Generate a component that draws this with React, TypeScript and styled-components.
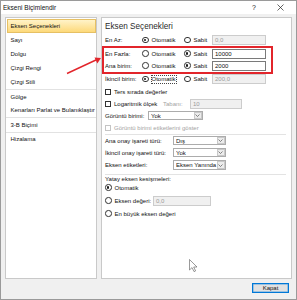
import styled, { createGlobalStyle } from "styled-components";

const GlobalStyle = createGlobalStyle`
  html, body {
    margin: 0;
    padding: 0;
    background: #ffffff;
  }
  body {
    font-family: "Liberation Sans", Arial, sans-serif;
    font-size: 6px;
    color: #111111;
  }
`;

const Window = styled.div`
  position: relative;
  width: 297px;
  height: 300px;
  box-sizing: border-box;
  border: 1px solid #9a9a9a;
  background: #f0f0f0;
  display: flex;
  flex-direction: column;
  overflow: hidden;
`;

const TitleBar = styled.div`
  height: 13px;
  flex: none;
  background: #ffffff;
  display: flex;
  align-items: center;
  padding: 0 3px 0 2px;
`;

const Title = styled.span`
  font-size: 6.5px;
  color: #111;
  flex: 1;
`;

const TitleButton = styled.span`
  width: 26px;
  display: flex;
  justify-content: center;
  align-items: center;
  font-size: 7px;
  color: #222;
`;

const Body = styled.div`
  display: flex;
  gap: 4px;
  padding: 3px 4px 0 4px;
  height: 265px;
  box-sizing: border-box;
  flex: none;
`;

const Nav = styled.div`
  width: 92px;
  flex: none;
  box-sizing: border-box;
  background: #ffffff;
  border: 1px solid #c9c9c9;
  padding-top: 1px;
`;

const NavItem = styled.div<{ $active?: boolean; $h?: number }>`
  height: ${(p) => p.$h ?? 13.5}px;
  box-sizing: border-box;
  display: flex;
  align-items: center;
  padding-left: 3px;
  white-space: nowrap;
  border: 1px solid ${(p) => (p.$active ? "#e6c064" : "transparent")};
  background: ${(p) =>
    p.$active ? "linear-gradient(#fff3c9, #fdd97a)" : "transparent"};
  margin: 0 0.5px;
`;

const NavSep = styled.div`
  height: 1px;
  background: #e2e2e2;
`;

const Pane = styled.div`
  flex: 1;
  box-sizing: border-box;
  background: #ffffff;
  border: 1px solid #c9c9c9;
  padding: 0 3px;
`;

const PaneTitle = styled.div`
  font-size: 8.2px;
  color: #2b2b2b;
  height: 13.5px;
  padding-top: 2px;
  display: flex;
  align-items: center;
`;

const Row = styled.div<{ $h?: number; $mt?: number }>`
  display: flex;
  align-items: center;
  height: ${(p) => p.$h ?? 12}px;
  margin-top: ${(p) => p.$mt ?? 0}px;
  white-space: nowrap;
`;

const Label = styled.span<{ $w?: number; $off?: boolean }>`
  flex: none;
  width: ${(p) => (p.$w ? `${p.$w}px` : "auto")};
  color: ${(p) => (p.$off ? "#a3a3a3" : "#111111")};
`;

const Choice = styled.label<{ $w: number }>`
  display: flex;
  align-items: center;
  gap: 3px;
  width: ${(p) => p.$w}px;
  flex: none;
`;

const Focused = styled.span`
  border: 1px dotted #444;
  margin: -1px;
  line-height: 7px;
`;

const Radio = styled.span<{ $on?: boolean }>`
  position: relative;
  width: 6.5px;
  height: 6.5px;
  flex: none;
  box-sizing: border-box;
  border-radius: 50%;
  border: 0.8px solid #333;
  background: #fff;
  &::after {
    content: "";
    position: absolute;
    inset: 1.2px;
    border-radius: 50%;
    background: ${(p) => (p.$on ? "#1a1a1a" : "transparent")};
  }
`;

const Check = styled.span<{ $off?: boolean }>`
  width: 6px;
  height: 6px;
  flex: none;
  box-sizing: border-box;
  border: 0.8px solid ${(p) => (p.$off ? "#c4c4c4" : "#333")};
  background: #fff;
  margin-right: 3px;
`;

const Input = styled.div<{ $w: number; $off?: boolean }>`
  width: ${(p) => p.$w}px;
  height: 10px;
  flex: none;
  box-sizing: border-box;
  border: 1px solid ${(p) => (p.$off ? "#cccccc" : "#7a7a7a")};
  background: ${(p) => (p.$off ? "#f0f0f0" : "#fff")};
  color: ${(p) => (p.$off ? "#9a9a9a" : "#111111")};
  padding-left: 2px;
  display: flex;
  align-items: center;
`;

const Select = styled.div<{ $w: number }>`
  width: ${(p) => p.$w}px;
  height: 9.5px;
  flex: none;
  box-sizing: border-box;
  border: 1px solid #acacac;
  background: #fff;
  display: flex;
  align-items: center;
  padding-left: 2px;
`;

const SelectText = styled.span`
  flex: 1;
  overflow: hidden;
`;

const ArrowBox = styled.span`
  width: 8px;
  height: 7.5px;
  flex: none;
  box-sizing: border-box;
  border: 1px solid #c9c9c9;
  background: #ececec;
  display: flex;
  align-items: center;
  justify-content: center;
  margin-right: 0.5px;
`;

const Highlight = styled.div`
  width: 171px;
  box-sizing: border-box;
  border: 2px solid #e2252b;
  margin: -1px 0 -1px -3px;
  padding-left: 1px;
`;

const Divider = styled.div<{ $mt?: number }>`
  height: 1px;
  background: #e3e3e3;
  margin-top: ${(p) => p.$mt ?? 0}px;
  margin-right: 2px;
`;

const Footer = styled.div`
  flex: 1;
  display: flex;
  justify-content: flex-end;
  align-items: flex-start;
  padding: 4px 7px 0 0;
`;

const Button = styled.div`
  width: 37px;
  height: 10px;
  box-sizing: border-box;
  border: 1px solid #0078d7;
  box-shadow: inset 0 0 0 0.5px #5aa3e0;
  background: #e1e1e1;
  display: flex;
  align-items: center;
  justify-content: center;
`;

const Overlay = styled.svg`
  position: absolute;
  left: 0;
  top: 0;
  pointer-events: none;
`;

const Chevron = () => (
  <svg width="5" height="3" viewBox="0 0 5 3">
    <path d="M0.5 0.5 L2.5 2.5 L4.5 0.5" fill="none" stroke="#555" strokeWidth="0.7" />
  </svg>
);

const Dropdown = ({ w, value }: { w: number; value: string }) => (
  <Select $w={w}>
    <SelectText>{value}</SelectText>
    <ArrowBox>
      <Chevron />
    </ArrowBox>
  </Select>
);

type BoundProps = {
  label: string;
  auto: boolean;
  value: string;
  focus?: boolean;
  h?: number;
};

const BoundRow = ({ label, auto, value, focus, h }: BoundProps) => (
  <Row $h={h}>
    <Label $w={37}>{label}</Label>
    <Choice $w={42}>
      <Radio $on={auto} />
      {focus ? <Focused>Otomatik</Focused> : <span>Otomatik</span>}
    </Choice>
    <Choice $w={28}>
      <Radio $on={!auto} />
      <span>Sabit</span>
    </Choice>
    <Input $w={54} $off={auto}>
      {value}
    </Input>
  </Row>
);

const navGroups = [
  ["Eksen Seçenekleri", "Sayı", "Dolgu", "Çizgi Rengi", "Çizgi Stili"],
  ["Gölge", "Kenarları Parlat ve Bulanıklaştır"],
  ["3-B Biçimi"],
  ["Hizalama"],
];

export default function App() {
  return (
    <>
      <GlobalStyle />
      <Window>
        <TitleBar>
          <Title>Ekseni Biçimlendir</Title>
          <TitleButton>?</TitleButton>
          <TitleButton>
            <svg width="7" height="7" viewBox="0 0 7 7">
              <path d="M0.5 0.5 L6.5 6.5 M6.5 0.5 L0.5 6.5" stroke="#222" strokeWidth="0.7" />
            </svg>
          </TitleButton>
        </TitleBar>

        <Body>
          <Nav>
            {navGroups.map((group, gi) => (
              <div key={gi}>
                {gi > 0 && <NavSep />}
                {group.map((item) => (
                  <NavItem key={item} $active={item === "Eksen Seçenekleri"} $h={gi === 0 ? 14 : 13.5}>
                    {item}
                  </NavItem>
                ))}
              </div>
            ))}
          </Nav>

          <Pane>
            <PaneTitle>Eksen Seçenekleri</PaneTitle>
            <BoundRow label="En Az:" auto value="0,0" h={13} />
            <Highlight>
              <BoundRow label="En Fazla:" auto={false} value="10000" />
              <BoundRow label="Ana birim:" auto={false} value="2000" />
            </Highlight>
            <BoundRow label="İkincil birim:" auto focus value="200,0" h={13} />

            <Row>
              <Check />
              <Label>Ters sırada değerler</Label>
            </Row>
            <Row>
              <Check />
              <Label $w={49}>Logaritmik ölçek</Label>
              <Label $w={27} $off>
                Tabanı:
              </Label>
              <Input $w={52} $off>
                10
              </Input>
            </Row>
            <Row>
              <Label $w={43}>Görüntü birimi:</Label>
              <Dropdown w={55} value="Yok" />
            </Row>
            <Row>
              <Check $off />
              <Label $off>Görüntü birimi etiketlerini göster</Label>
            </Row>
            <Divider />
            <Row>
              <Label $w={68}>Ana onay işareti türü:</Label>
              <Dropdown w={53} value="Dış" />
            </Row>
            <Row>
              <Label $w={68}>İkincil onay işareti türü:</Label>
              <Dropdown w={53} value="Yok" />
            </Row>
            <Row $h={13}>
              <Label $w={68}>Eksen etiketleri:</Label>
              <Dropdown w={53} value="Eksen Yanında" />
            </Row>
            <Divider $mt={2} />
            <Row $h={9}>
              <Label>Yatay eksen kesişmeleri:</Label>
            </Row>
            <Row $h={8}>
              <Choice $w={60}>
                <Radio $on />
                <span>Otomatik</span>
              </Choice>
            </Row>
            <Row $h={13} $mt={2.5}>
              <Choice $w={48}>
                <Radio />
                <span>Eksen değeri:</span>
              </Choice>
              <Input $w={58} $off>
                0,0
              </Input>
            </Row>
            <Row $h={13}>
              <Choice $w={90}>
                <Radio />
                <span>En büyük eksen değeri</span>
              </Choice>
            </Row>
          </Pane>
        </Body>

        <Footer>
          <Button>Kapat</Button>
        </Footer>

        <Overlay width="297" height="300" viewBox="0 0 297 300">
          <line x1="66" y1="72.5" x2="96" y2="58.5" stroke="#e2252b" strokeWidth="1.4" />
          <path d="M100 57 L93.5 56.6 L96.3 62.4 Z" fill="#e2252b" />
          <path
            d="M188.5 258.5 L188.5 269 L191 266.6 L193 270.6 L194.6 269.9 L192.7 266 L196 266 Z"
            fill="#ffffff"
            stroke="#555"
            strokeWidth="0.6"
          />
        </Overlay>
      </Window>
    </>
  );
}
